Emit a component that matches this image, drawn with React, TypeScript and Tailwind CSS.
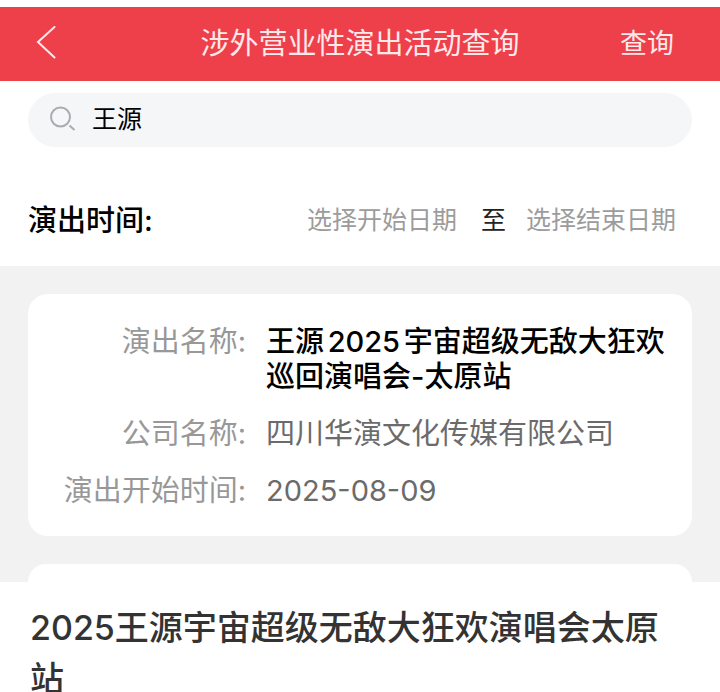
import { useState } from 'react';

interface Performance {
    name: string;
    company: string;
    startDate: string;
}

const performances: Performance[] = [
    {
        name: '王源2025宇宙超级无敌大狂欢巡回演唱会-太原站',
        company: '四川华演文化传媒有限公司',
        startDate: '2025-08-09',
    },
];

function BackIcon() {
    return (
        <svg
            className="h-9 w-6"
            viewBox="0 0 24 36"
            fill="none"
            stroke="currentColor"
            strokeWidth="2"
            strokeLinecap="round">
            <path d="M20.5 1 4 16l16.500 15.500" />
        </svg>
    );
}

function SearchIcon() {
    return (
        <svg
            className="h-7 w-7 shrink-0 text-[#a9abae]"
            viewBox="0 0 28 28"
            fill="none"
            stroke="currentColor"
            strokeWidth="2">
            <circle cx="12.5" cy="11" r="9.5" />
            <path d="m21.5 19.500 5 4.500" />
        </svg>
    );
}

function Row({ label, value, strong }: { label: string; value: string; strong?: boolean }) {
    return (
        <div className="flex gap-5">
            <dt className="w-[190px] shrink-0 text-right text-[#989898] [text-autospace:no-autospace]">
                {label}:
            </dt>
            <dd className={strong ? 'flex-1 font-medium text-black' : 'flex-1 text-[#6b6b6b]'}>
                {value}
            </dd>
        </div>
    );
}

export default function App() {
    const [keyword, setKeyword] = useState('王源');
    const [start, setStart] = useState('');
    const [end, setEnd] = useState('');

    return (
        <div
            lang="zh-CN"
            className="bg-white pt-[7px] font-['Inter','Noto_Sans_CJK_SC',sans-serif] [text-autospace:normal]">
            <header className="flex h-[74px] items-center justify-between bg-[#ee404a] pr-[46px] pl-[34px] text-[#ffe9ea]">
                <button type="button" aria-label="返回" className="w-[66px]">
                    <BackIcon />
                </button>
                <h1 className="text-[29px]">涉外营业性演出活动查询</h1>
                <button type="submit" form="search" className="text-[27px]">
                    查询
                </button>
            </header>

            <form id="search" onSubmit={(e) => e.preventDefault()}>
                <div className="px-7 pt-3">
                    <label className="flex h-[54px] items-center gap-4 rounded-full bg-[#f5f6f8] px-5">
                        <SearchIcon />
                        <input
                            type="text"
                            aria-label="演出名称"
                            value={keyword}
                            onChange={(e) => setKeyword(e.target.value)}
                            className="min-w-0 flex-1 text-[25px] text-black outline-none"
                        />
                    </label>
                </div>
                <div className="mt-7 flex h-[91px] items-center pr-10 pl-7">
                    <span className="flex-1 text-[29px] font-medium text-black [text-autospace:no-autospace]">
                        演出时间:
                    </span>
                    <input
                        type="text"
                        aria-label="开始日期"
                        placeholder="选择开始日期"
                        value={start}
                        onChange={(e) => setStart(e.target.value)}
                        className="w-[154px] text-[25px] outline-none placeholder:text-[#9c9c9c]"
                    />
                    <span className="px-5 text-[25px] text-[#222]">至</span>
                    <input
                        type="text"
                        aria-label="结束日期"
                        placeholder="选择结束日期"
                        value={end}
                        onChange={(e) => setEnd(e.target.value)}
                        className="w-[154px] text-[25px] outline-none placeholder:text-[#9c9c9c]"
                    />
                </div>
            </form>

            <main className="bg-[#f2f2f2] px-7 pt-7">
                {performances.map((p) => (
                    <dl
                        key={p.name}
                        className="mb-7 flex flex-col gap-[22px] rounded-[20px] bg-white pt-[30px] pr-5 pb-7 pl-7 text-[29px] leading-[35px]">
                        <Row label="演出名称" value={p.name} strong />
                        <Row label="公司名称" value={p.company} />
                        <Row label="演出开始时间" value={p.startDate} />
                    </dl>
                ))}
                {/* top edge of the next result */}
                <div className="h-[18px] rounded-t-[20px] bg-white" />
            </main>

            <p className="px-[30px] pt-5 text-[34px] leading-[51px] font-medium text-[#333] [text-autospace:no-autospace]">
                2025王源宇宙超级无敌大狂欢演唱会太原站
            </p>
        </div>
    );
}
